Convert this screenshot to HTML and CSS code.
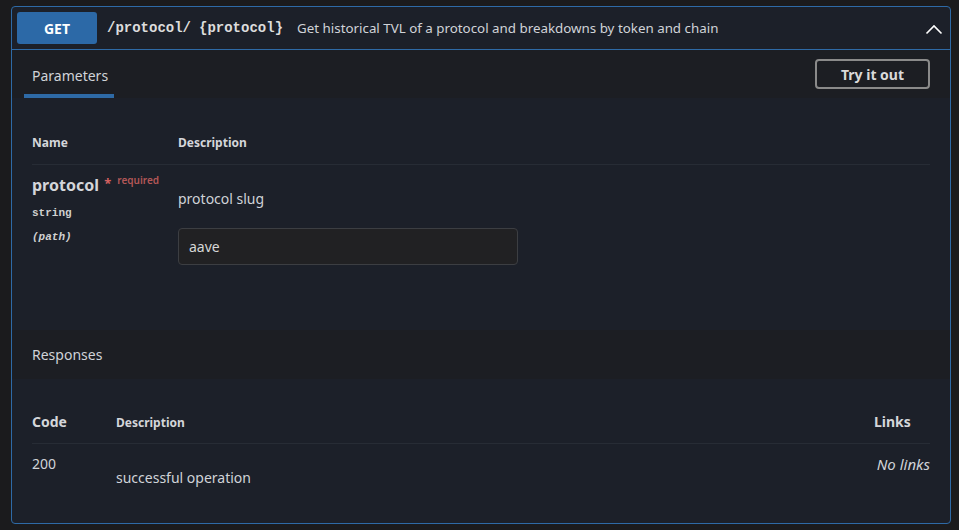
FILE: index.html
```html
<!DOCTYPE html>
<html>
<head>
<meta charset="utf-8">
<link rel="stylesheet" href="styles.css">
</head>
<body>
<div class="opblock">
  <div class="op-summary">
    <span class="method">GET</span>
    <span class="path">/protocol/<span class="wbr"></span>{protocol}</span>
    <span class="summary-desc">Get historical TVL of a protocol and breakdowns by token and chain</span>
    <svg class="chev" width="18" height="12" viewBox="0 0 18 12"><path d="M1.5 10.5 L9 3 L16.5 10.5" fill="none" stroke="#fff" stroke-width="1.6"/></svg>
  </div>
  <div class="section-head">
    <div class="tab">Parameters</div>
    <button class="try">Try it out</button>
  </div>
  <div class="params">
    <div class="prow head">
      <div class="col-name">Name</div>
      <div class="col-desc">Description</div>
    </div>
    <div class="prow body">
      <div class="col-name">
        <div class="pname">protocol<span class="star">&nbsp;*</span><span class="req">required</span></div>
        <div class="ptype">string</div>
        <div class="pin">(path)</div>
      </div>
      <div class="col-desc">
        <div class="pdesc">protocol slug</div>
        <div class="input">aave</div>
      </div>
    </div>
  </div>
  <div class="section-head resp-head">
    <div class="resp-title">Responses</div>
  </div>
  <div class="responses">
    <div class="rrow rhead">
      <div class="rc-code">Code</div>
      <div class="rc-desc">Description</div>
      <div class="rc-links">Links</div>
    </div>
    <div class="rrow rbody">
      <div class="rc-code">200</div>
      <div class="rc-desc"><div class="rdesc">successful operation</div></div>
      <div class="rc-links"><i>No links</i></div>
    </div>
  </div>
</div>
</body>
</html>
```
FILE: styles.css
```css
html, body { margin: 0; padding: 0; background: #1b1b1d; }
body { padding: 6px 0 0 11px; font-family: "Noto Sans", "Open Sans", sans-serif; color: #d4d6da; height: 524px; box-sizing: border-box; }
.opblock { width: 940px; box-sizing: border-box; border: 1px solid #2e6aa6; border-radius: 4px; background: #1c2029; overflow: hidden; }
.op-summary { display: flex; align-items: center; height: 42px; padding: 0 7px 0 5px; border-bottom: 1px solid #2e6aa6; }
.method { width: 80px; height: 32px; display: flex; align-items: center; justify-content: center; background: #2c69a7; color: #fff; font-weight: 700; font-size: 14px; border-radius: 3px; }
.path { margin-left: 10px; font-family: "Liberation Mono", monospace; font-size: 14px; font-weight: 700; color: #dcdcdc; display: flex; }
.wbr { display: inline-block; width: 8px; }
.summary-desc { margin-left: 14px; font-size: 13.35px; color: #d0d3d8; flex: 1; }
.chev { margin-top: 1px; }
.section-head { display: flex; align-items: center; justify-content: space-between; height: 48px; background: #1c1e23; padding: 0 20px 0 12px; }
.tab { align-self: stretch; display: flex; align-items: center; padding: 7px 8px 0; font-size: 14px; color: #d0d3d8; border-bottom: 4px solid #2e6aa6; box-sizing: border-box; width: 90px; }
.try { width: 115px; height: 30px; background: transparent; border: 2px solid #8a8a8a; border-radius: 4px; color: #dadada; font-family: "Noto Sans", sans-serif; font-weight: 700; font-size: 14px; padding: 0; margin-top: 0; }
.params { height: 232px; padding: 0 20px; box-sizing: border-box; }
.prow { display: flex; }
.prow.head { padding-top: 36px; height: 67px; box-sizing: border-box; border-bottom: 1px solid #272c35; font-size: 12px; font-weight: 700; color: #d4d6da; }
.col-name { width: 146px; }
.col-desc { flex: 1; }
.prow.body { padding-top: 4px; }
.pname { font-size: 16px; font-weight: 700; color: #d4d6da; line-height: 22px; }
.star { color: #d36060; font-size: 13px; vertical-align: 3px; margin-left: 2px; }
.req { color: #b35757; font-size: 10px; font-weight: 600; vertical-align: 7px; margin-left: 6px; }
.ptype { font-family: "Liberation Mono", monospace; font-weight: 700; font-size: 11px; margin-top: 11px; color: #d0d0d0; }
.pin { font-family: "Liberation Mono", monospace; font-weight: 700; font-style: italic; font-size: 11px; margin-top: 12px; color: #d0d0d0; }
.pdesc { font-size: 14px; margin-top: 20px; color: #d0d3d8; }
.input { width: 340px; height: 37px; box-sizing: border-box; margin-top: 20px; background: #212123; border: 1px solid #3c3e42; border-radius: 4px; padding: 0 10px; display: flex; align-items: center; font-size: 14px; color: #d6d6d6; }
.resp-head { height: 49px; }
.resp-title { font-size: 14px; color: #d0d3d8; padding-left: 8px; }
.responses { padding: 0 20px; height: 144px; box-sizing: border-box; }
.rrow { display: flex; }
.rhead { padding-top: 33px; height: 65px; box-sizing: border-box; border-bottom: 1px solid #272c35; align-items: baseline; font-weight: 700; }
.rc-code { width: 84px; font-size: 14px; }
.rc-desc { flex: 1; }
.rhead .rc-desc { font-size: 12px; }
.rc-links { width: 60px; box-sizing: border-box; text-align: right; font-size: 14px; }
.rhead .rc-links { text-align: left; padding-left: 4px; }
.rbody { padding-top: 10px; font-size: 14px; color: #d0d3d8; }
.rbody .rc-links { font-size: 15px; }
.rdesc { margin-top: 14px; }
```
